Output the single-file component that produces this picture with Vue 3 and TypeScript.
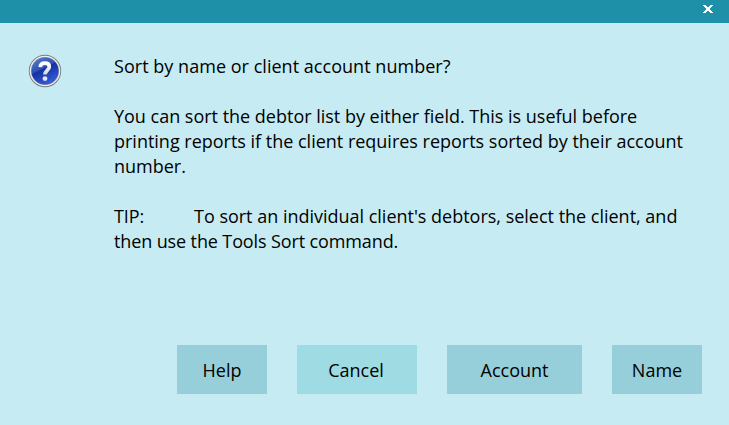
<script setup lang="ts">
interface DialogButton {
  label: string
  kind: 'small' | 'medium' | 'large'
  focused?: boolean
}

const intro: string[] = ['Sort by name or client account number?']
const details: string[] = [
  'You can sort the debtor list by either field. This is useful before',
  'printing reports if the client requires reports sorted by their account',
  'number.',
]
const buttons: DialogButton[] = [
  { label: 'Help', kind: 'small' },
  { label: 'Cancel', kind: 'medium', focused: true },
  { label: 'Account', kind: 'large' },
  { label: 'Name', kind: 'small' },
]
</script>

<template>
  <div class="dialog" role="dialog">
    <header class="titlebar">
      <button class="close" aria-label="Close">
        <svg width="10" height="8" viewBox="0 0 10 8" shape-rendering="crispEdges">
          <path d="M0 0h3v1h1v1h2v-1h1v-1h3v1h-1v1h-1v1h-1v2h1v1h1v1h1v1h-3v-1h-1v-1h-2v1h-1v1h-3v-1h1v-1h1v-1h1v-2h-1v-1h-1v-1h-1z" fill="#fff" />
        </svg>
      </button>
    </header>
    <main class="body">
      <svg class="icon" width="34" height="34" viewBox="0 0 34 34">
        <defs>
          <linearGradient id="ball" x1="0" y1="0" x2="0.5" y2="1">
            <stop offset="0" stop-color="#5f83d2" />
            <stop offset="0.48" stop-color="#2c50b4" />
            <stop offset="0.52" stop-color="#1530a0" />
            <stop offset="1" stop-color="#3558d4" />
          </linearGradient>
          <linearGradient id="mark" x1="0" y1="0" x2="0" y2="1">
            <stop offset="0" stop-color="#fff" />
            <stop offset="1" stop-color="#d5daea" />
          </linearGradient>
        </defs>
        <circle cx="17" cy="17" r="16.2" fill="#747b80" />
        <circle cx="17" cy="17" r="15.3" fill="#eeeeec" />
        <circle cx="17" cy="17" r="14" fill="#8995b5" />
        <circle cx="17" cy="17" r="13.5" fill="url(#ball)" />
        <path d="M12.2 13.2C12.4 10.2 14.4 9.2 16.8 9.2C19.6 9.2 21.3 10.6 21.3 12.8C21.3 16 17 16.2 17 20.6" fill="none" stroke="url(#mark)" stroke-width="3.7" />
        <circle cx="17" cy="24.6" r="2.4" fill="#e3e6f0" />
      </svg>
      <div class="message">
        <p><span v-for="line in intro" :key="line" class="line intro">{{ line }}</span></p>
        <p><span v-for="line in details" :key="line" class="line">{{ line }}</span></p>
        <p>
          <span class="line"><span class="tab">TIP:</span>To sort an individual client's debtors, select the client, and</span>
          <span class="line last">then use the Tools Sort command.</span>
        </p>
      </div>
    </main>
    <footer class="actions">
      <button v-for="b in buttons" :key="b.label" class="action" :class="[b.kind, { focused: b.focused }]">{{ b.label }}</button>
    </footer>
  </div>
</template>

<style>
body { margin: 0; }
</style>

<style scoped>
.dialog {
  width: 729px;
  height: 425px;
  display: flex;
  flex-direction: column;
  overflow: hidden;
  background: #c7ebf2;
  color: #000;
  font: 18px/25px "Open Sans", "Noto Sans", sans-serif;
}
.titlebar {
  height: 23px;
  flex: none;
  display: flex;
  justify-content: flex-end;
  background: #1e91a9;
}
.close {
  width: 42px;
  height: 18px;
  padding: 0;
  border: 0;
  background: none;
  display: flex;
  align-items: center;
  justify-content: center;
}
.body {
  flex: 1;
  display: flex;
  padding: 31px 0 0 28px;
}
.icon { flex: none; }
.message { margin-left: 52px; }
p { margin: 0 0 25px; }
.line {
  display: block;
  white-space: nowrap;
  letter-spacing: -0.01px;
}
.intro { letter-spacing: 0.03px; }
.last { letter-spacing: -0.12px; }
.tab { display: inline-block; width: 80px; letter-spacing: -0.1px; }
.actions {
  flex: none;
  display: flex;
  justify-content: flex-end;
  gap: 30px;
  padding: 0 27px 31px 0;
}
.action {
  height: 49px;
  padding: 2px 0 0;
  border: 0;
  background: #96ced9;
  color: #000;
  font: inherit;
}
.small { width: 90px; }
.medium { width: 120px; }
.large { width: 135px; }
.focused { padding-right: 2px; background: #9fdbe3; }
</style>
